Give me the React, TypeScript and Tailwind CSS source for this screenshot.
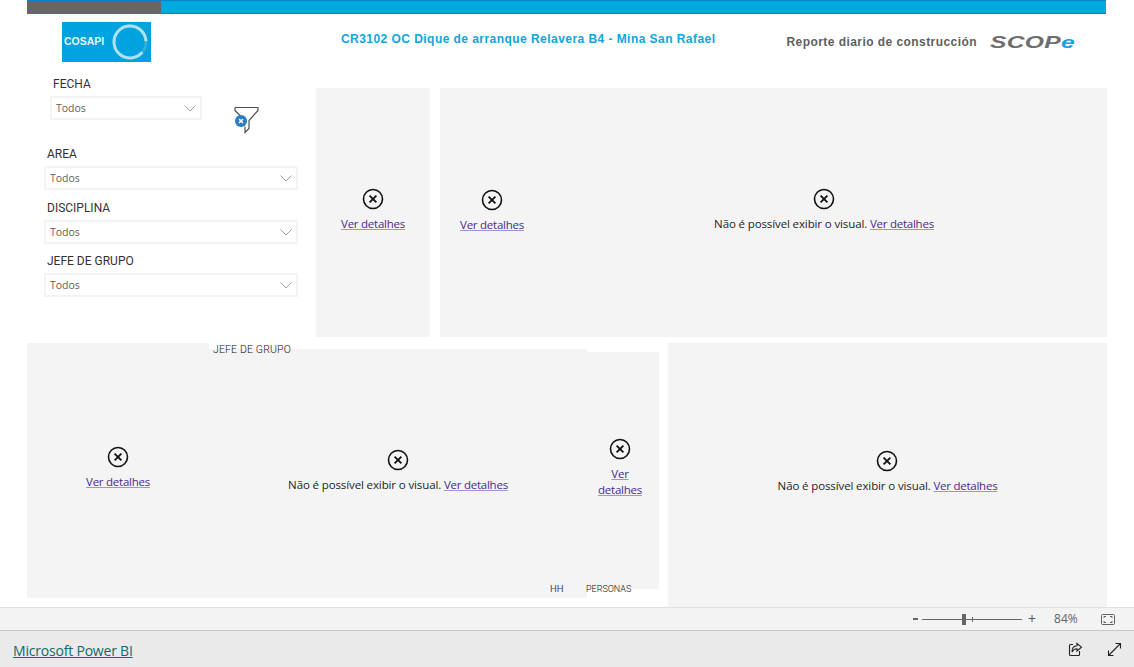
const bodyFont = "font-['Open_Sans','Noto_Sans',sans-serif]";
const labelFont = "font-['Roboto','Noto_Sans',sans-serif]";

interface SlicerProps {
  label: string;
  width: string;
}

function Slicer({ label, width }: SlicerProps) {
  return (
    <div className={width}>
      <div className={`${labelFont} pl-[3px] text-[12px] leading-[14px] text-[#3a3033]`}>{label}</div>
      <div className="mt-[5px] flex h-[24px] items-center justify-between border-2 border-[#f4f4f4] pl-[4px] pr-[4px]">
        <span className={`${bodyFont} pt-[2px] text-[10.5px] text-[#605e5c]`}>Todos</span>
        <svg width="12" height="7" viewBox="0 0 12 7" fill="none" stroke="#9aa1a8" strokeWidth="1">
          <path d="M0.5 0.5L6 6l5.5-5.5" />
        </svg>
      </div>
    </div>
  );
}

function ErrorIcon() {
  return (
    <svg width="22" height="22" viewBox="0 0 22 22" fill="none" stroke="#111" className="shrink-0">
      <circle cx="11" cy="11" r="9.5" strokeWidth="1.6" />
      <path d="M7.6 7.6l6.8 6.8M14.4 7.6l-6.8 6.8" strokeWidth="1.8" />
    </svg>
  );
}

function VisualError({ message, narrow }: { message?: boolean; narrow?: boolean }) {
  return (
    <div className={`${bodyFont} mb-[6px] flex flex-col items-center text-center text-[11.5px] leading-[16px] text-[#252423]`}>
      <ErrorIcon />
      <div className="mt-[6px]">
        {message && <span className="tracking-[-0.12px]">Não é possível exibir o visual. </span>}
        <a href="#" className={`${narrow ? 'inline-block w-[50px]' : ''} tracking-[-0.25px] text-[#4b2a8c] underline decoration-[#a98fce]`}>
          Ver detalhes
        </a>
      </div>
    </div>
  );
}

function ClearFilterIcon() {
  return (
    <svg width="28" height="30" viewBox="0 0 28 30" fill="none">
      <path d="M2 2.5h23v3l-9 10v8l-4 4v-6" stroke="#4a4f55" strokeWidth="1.2" fill="#fff" />
      <path d="M2 2.5v3l5 5" stroke="#4a4f55" strokeWidth="1.2" />
      <circle cx="8" cy="16" r="6" fill="#2a7cc0" />
      <path d="M6 14l4 4M10 14l-4 4" stroke="#fff" strokeWidth="1.7" />
    </svg>
  );
}

function CosapiLogo() {
  return (
    <div className="flex h-[40px] w-[89px] items-center bg-[#00a3dd] pl-[2px]">
      <span className="font-['Liberation_Sans',sans-serif] text-[10.5px] font-bold text-[#e4f5fb]">COSAPI</span>
      <svg width="38" height="38" viewBox="0 0 38 38" fill="none" className="ml-[7px]">
        <circle cx="19" cy="19" r="16" stroke="#cdeef9" strokeOpacity="0.2" strokeWidth="3" />
        <circle cx="19" cy="19" r="16" stroke="#d8f2fb" strokeOpacity="0.75" strokeWidth="3" strokeDasharray="88 12.5" transform="rotate(40 19 19)" />
      </svg>
    </div>
  );
}

export default function App() {
  return (
    <div className="flex h-[667px] w-[1134px] flex-col overflow-hidden bg-white">
      {/* top band */}
      <div className="ml-[27px] flex h-[14px] w-[1079px] shrink-0 border-y border-[#0f7fcb] bg-[#00a8e0]">
        <div className="w-[134px] bg-[#666666]" />
      </div>

      {/* report canvas */}
      <div className="flex h-[593px] shrink-0 flex-col">
        <div className="flex h-[74px] shrink-0">
          <div className="ml-[62px] mt-[8px]">
            <CosapiLogo />
          </div>
          <div className="ml-[190px] mt-[17px] font-['Liberation_Sans',sans-serif] text-[12px] font-bold leading-[16px] tracking-[0.45px] text-[#0ea5e0]">
            CR3102 OC Dique de arranque Relavera B4 - Mina San Rafael
          </div>
          <div className="ml-[71px] mt-[20px] font-['Liberation_Sans',sans-serif] text-[12px] font-bold leading-[16px] tracking-[0.44px] text-[#5f5f5f]">
            Reporte diario de construcción
          </div>
          <div className="ml-[13px] mt-[19px] origin-left scale-x-[1.45] font-['Liberation_Sans',sans-serif] text-[17px] font-bold italic leading-[20px] tracking-[0.2px] text-[#6e6e6e]">
            SCOP<span className="text-[#16a3dc]">e</span>
          </div>
        </div>

        <div className="flex h-[250px] shrink-0">
          <div className="ml-[44px] flex w-[272px] flex-col">
            <div className="flex">
              <Slicer label="FECHA" width="ml-[6px] w-[152px] -mt-[11px]" />
              <div className="ml-[31px] mt-[17px]">
                <ClearFilterIcon />
              </div>
            </div>
            <div className="mt-[12px] flex flex-col gap-[11px]">
              <Slicer label="AREA" width="w-[254px]" />
              <Slicer label="DISCIPLINA" width="w-[254px]" />
              <Slicer label="JEFE DE GRUPO" width="w-[254px] -mt-[1px]" />
            </div>
          </div>
          <div className="flex h-[249px] w-[114px] items-center justify-center bg-[#f4f4f4]">
            <VisualError />
          </div>
          <div className="ml-[10px] flex h-[249px] w-[667px] bg-[#f4f4f4]">
            <div className="flex w-[104px] items-center justify-center pt-[2px]">
              <VisualError />
            </div>
            <div className="flex flex-1 items-center justify-center pr-[3px]">
              <VisualError message />
            </div>
          </div>
        </div>

        <div className="mt-[5px] flex h-[264px] shrink-0">
          <div className="relative ml-[27px] flex h-[255px] w-[632px] items-start">
            <div className="flex h-[255px] w-[182px] items-center justify-center bg-[#f4f4f4]">
              <VisualError />
            </div>
            <div className="mt-[6px] flex h-[249px] w-[378px] items-center justify-center bg-[#f4f4f4]">
              <VisualError message />
            </div>
            <div className="mt-[9px] flex h-[237px] w-[72px] items-center justify-center bg-[#f4f4f4] pr-[6px]">
              <VisualError narrow />
            </div>
            <span className="absolute left-[182px] top-0 h-[6px] w-[84px] bg-white" />
            <span className={`${labelFont} absolute left-[186px] top-0 text-[10.5px] font-light leading-[14px] tracking-[0.15px] text-[#111111]`}>JEFE DE GRUPO</span>
            <span className={`${labelFont} absolute left-[523px] top-[240px] text-[9.5px] leading-[12px] text-[#3d4a58]`}>HH</span>
            <span className={`${labelFont} absolute left-[559px] top-[240px] text-[9px] font-light leading-[12px] text-[#111111]`}>PERSONAS</span>
          </div>
          <div className="ml-[9px] flex h-[264px] w-[439px] items-center justify-center bg-[#f4f4f4]">
            <VisualError message />
          </div>
        </div>
      </div>

      {/* zoom bar */}
      <div className={`${bodyFont} flex h-[24px] shrink-0 items-center border-y border-t-[#e0e0e0] border-b-[#c8c8c8] bg-[#f3f3f3] text-[#5f6368]`}>
        <span className="ml-[913px] h-[2px] w-[5px] bg-[#666]" />
        <div className="relative ml-[4px] h-[1px] w-[100px] bg-[#666]">
          <span className="absolute left-[40px] -top-[5px] h-[11px] w-[4px] bg-[#666]" />
          <span className="absolute left-[50px] -top-[2px] h-[5px] w-[1px] bg-[#666]" />
        </div>
        <span className="ml-[6px] text-[14px] leading-none text-[#555]">+</span>
        <span className="ml-[18px] text-[12px]">84%</span>
        <svg width="14" height="11" viewBox="0 0 14 11" fill="none" stroke="#5f6368" className="ml-[23px]">
          <rect x="0.5" y="0.5" width="13" height="10" rx="1" />
          <path d="M3 4V2.5h2M11 4V2.5H9M3 7v1.5h2M11 7v1.5H9" />
        </svg>
      </div>

      {/* footer */}
      <div className="flex flex-1 items-center bg-[#eaeaea]">
        <a href="#" className={`${bodyFont} ml-[13px] mt-[2px] text-[14px] font-medium tracking-[-0.2px] text-[#0f6b6b] underline`}>
          Microsoft Power BI
        </a>
        <svg width="15" height="15" viewBox="0 0 15 15" fill="none" stroke="#222" strokeWidth="1.1" className="ml-[935px]">
          <path d="M5 2.5H2.5a1 1 0 0 0-1 1v9a1 1 0 0 0 1 1h8a1 1 0 0 0 1-1V9" />
          <path d="M9 1.5l4.5 3.7L9 9V6.8C6.5 6.8 5 8 4 10c0-3.5 2-6 5-6.2z" />
        </svg>
        <svg width="15" height="15" viewBox="0 0 15 15" fill="none" stroke="#222" strokeWidth="1.1" className="ml-[24px]">
          <path d="M1.5 13.5l12-12M8.5 1.5h5v5M1.5 8.5v5h5" />
        </svg>
      </div>
    </div>
  );
}
